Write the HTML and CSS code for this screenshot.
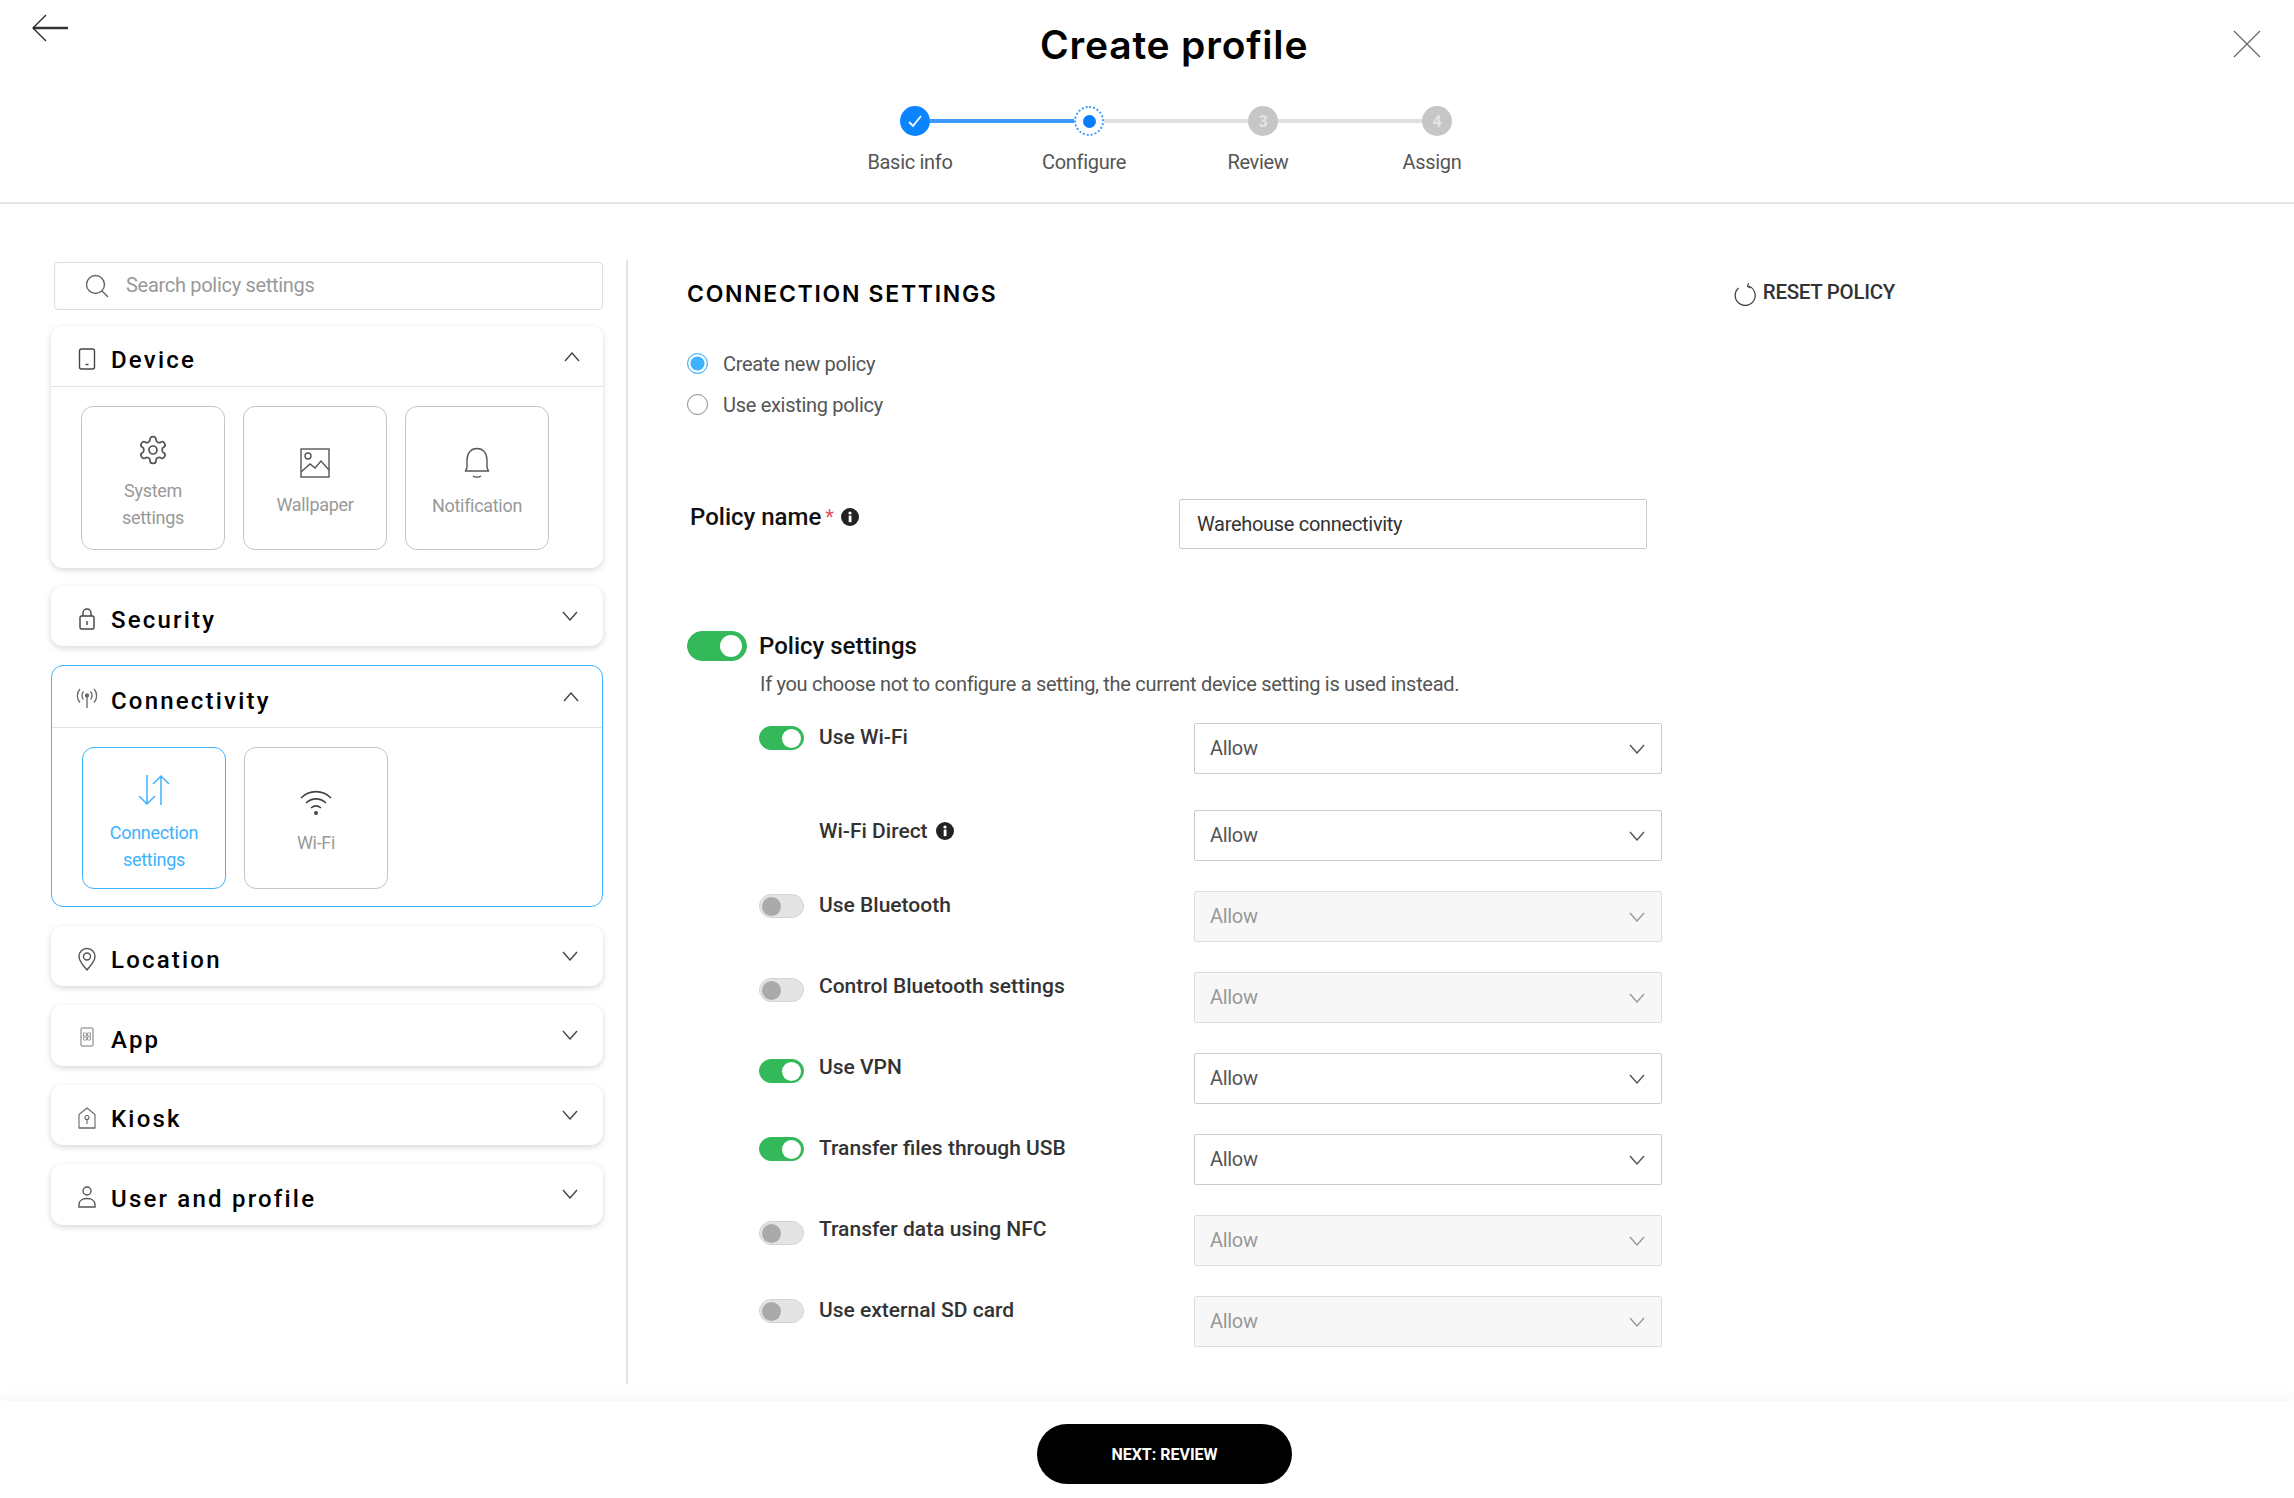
FILE: index.html
```html
<!DOCTYPE html>
<html>

<head>
    <meta charset="UTF-8">
    <title>Create profile</title>
    <link rel="stylesheet" href="styles.css">
</head>

<body>
    <svg class="sprite" width="0" height="0">
        <symbol id="chev-down" viewBox="0 0 16 10"><path d="M1 1l7 8 7-8" fill="none" stroke="currentColor" stroke-width="1.4"/></symbol>
        <symbol id="chev-up" viewBox="0 0 16 10"><path d="M1 9l7-8 7 8" fill="none" stroke="currentColor" stroke-width="1.4"/></symbol>
        <symbol id="info" viewBox="0 0 18 18"><circle cx="9" cy="9" r="9" fill="#222"/><rect x="7.7" y="7.6" width="2.8" height="6.6" fill="#fff"/><circle cx="9" cy="5" r="1.6" fill="#fff"/></symbol>
    </svg>

    <!-- top bar with steps -->
    <header class="top">
        <div class="top-row">
            <svg class="back" width="38" height="28" viewBox="0 0 38 28"><path d="M2 14h35" fill="none" stroke="#333" stroke-width="2.4"/><path d="M15 1L2 14l13 13" fill="none" stroke="#222" stroke-width="1.3"/></svg>
            <h1 class="title">Create profile</h1>
            <svg class="close" width="28" height="28" viewBox="0 0 28 28"><path d="M1 1l26 26M27 1L1 27" fill="none" stroke="#666" stroke-width="1.2"/></svg>
        </div>
        <div class="steps">
            <div class="dot dot-done"><svg width="16" height="14" viewBox="0 0 16 14"><path d="M2 8l4 4 8-10" fill="none" stroke="#fff" stroke-width="1.8"/></svg></div>
            <div class="line line-done"></div>
            <div class="dot dot-now"><span></span></div>
            <div class="line"></div>
            <div class="dot dot-todo">3</div>
            <div class="line"></div>
            <div class="dot dot-todo">4</div>
        </div>
        <div class="step-labels">
            <span>Basic info</span>
            <span>Configure</span>
            <span>Review</span>
            <span>Assign</span>
        </div>
    </header>

    <main class="page">
        <!-- policy categories -->
        <aside class="side">
            <div class="search">
                <svg width="24" height="24" viewBox="0 0 24 24"><circle cx="10.5" cy="10.5" r="9" fill="none" stroke="#666" stroke-width="1.4"/><path d="M17 17l6 6" fill="none" stroke="#666" stroke-width="1.4"/></svg>
                <span class="search-text">Search policy settings</span>
            </div>

            <section class="card card-device">
                <div class="card-head">
                    <svg class="card-icon" width="30" height="24" viewBox="0 0 30 24"><rect x="7.5" y="2" width="15" height="20" rx="2" fill="none" stroke="#444" stroke-width="1.4"/><path d="M13.500 17.500h3" stroke="#444" stroke-width="1.4"/></svg>
                    <span class="card-name">Device</span>
                    <svg class="chev chev-open"><use href="#chev-up"/></svg>
                </div>
                <div class="tiles">
                    <div class="tile">
                        <svg class="gear" width="32" height="32" viewBox="0 0 24 24" fill="none" stroke="#555" stroke-width="1.3"><path d="M12.220 2h-.44a2 2 0 0 0-2 2v.18a2 2 0 0 1-1 1.730l-.43.250a2 2 0 0 1-2 0l-.15-.08a2 2 0 0 0-2.730.730l-.22.380a2 2 0 0 0 .730 2.730l.15.100a2 2 0 0 1 1 1.720v.510a2 2 0 0 1-1 1.740l-.15.090a2 2 0 0 0-.730 2.730l.22.380a2 2 0 0 0 2.730.730l.15-.08a2 2 0 0 1 2 0l.43.250a2 2 0 0 1 1 1.730V20a2 2 0 0 0 2 2h.44a2 2 0 0 0 2-2v-.18a2 2 0 0 1 1-1.730l.43-.25a2 2 0 0 1 2 0l.15.080a2 2 0 0 0 2.730-.73l.22-.39a2 2 0 0 0-.73-2.730l-.15-.08a2 2 0 0 1-1-1.740v-.5a2 2 0 0 1 1-1.740l.15-.09a2 2 0 0 0 .730-2.730l-.22-.38a2 2 0 0 0-2.730-.73l-.15.080a2 2 0 0 1-2 0l-.43-.25a2 2 0 0 1-1-1.730V4a2 2 0 0 0-2-2z"/><circle cx="12" cy="12" r="3"/></svg>
                        <span class="tile-text">System<br>settings</span>
                    </div>
                    <div class="tile">
                        <svg width="30" height="30" viewBox="0 0 30 30" fill="none" stroke="#555" stroke-width="1.4"><rect x="1" y="1" width="28" height="28"/><circle cx="8" cy="8" r="3"/><path d="M1 24l9-8 5 4 6-7 8 9"/></svg>
                        <span class="tile-text">Wallpaper</span>
                    </div>
                    <div class="tile">
                        <svg width="26" height="32" viewBox="0 0 26 32" fill="none" stroke="#555" stroke-width="1.4"><path d="M1.500 24c0-1 1.500-2 1.500-4v-7C3 6 7 1.500 13 1.500S23 6 23 13v7c0 2 1.500 3 1.500 4z"/><path d="M9 29c2 1.500 6 1.500 8 0"/></svg>
                        <span class="tile-text">Notification</span>
                    </div>
                </div>
            </section>

            <section class="card">
                <div class="card-head">
                    <svg class="card-icon" width="30" height="24" viewBox="0 0 30 24" fill="none" stroke="#444" stroke-width="1.4"><rect x="8" y="9" width="14" height="13" rx="1.500"/><path d="M11 9V6a4 4 0 0 1 8 0v3M15 14v4"/></svg>
                    <span class="card-name">Security</span>
                    <svg class="chev"><use href="#chev-down"/></svg>
                </div>
            </section>

            <section class="card card-active">
                <div class="card-head">
                    <svg class="card-icon" width="30" height="24" viewBox="0 0 30 24" fill="none" stroke="#666" stroke-width="1.300"><path d="M15 9v12M11.500 4.500c-2 2-2 6 0 8M18.500 4.500c2 2 2 6 0 8M8 2c-3.500 3.500-3.500 10 0 13.500M22 2c3.500 3.500 3.500 10 0 13.500"/><circle cx="15" cy="8.500" r="1.500" fill="#666"/></svg>
                    <span class="card-name">Connectivity</span>
                    <svg class="chev chev-open"><use href="#chev-up"/></svg>
                </div>
                <div class="tiles">
                    <div class="tile tile-active">
                        <svg width="34" height="32" viewBox="0 0 34 32" fill="none" stroke="#3db2ff" stroke-width="1.500"><path d="M10 1v29M2 22l8 8 8-8M24 31V2M16 10l8-8 8 8"/></svg>
                        <span class="tile-text">Connection<br>settings</span>
                    </div>
                    <div class="tile">
                        <svg width="32" height="26" viewBox="0 0 32 26" fill="none" stroke="#444" stroke-width="1.600"><path d="M1 8c8-8.500 22-8.500 30 0M6 13c6-5.500 14-5.500 20 0M11 18c3-2.500 7-2.500 10 0"/><circle cx="16" cy="23" r="2" fill="#444" stroke="none"/></svg>
                        <span class="tile-text">Wi-Fi</span>
                    </div>
                </div>
            </section>

            <section class="card">
                <div class="card-head">
                    <svg class="card-icon" width="30" height="24" viewBox="0 0 30 24" fill="none" stroke="#555" stroke-width="1.400"><path d="M15 23C11 18 7 14.500 7 9.500a8 8 0 0 1 16 0C23 14.500 19 18 15 23z"/><circle cx="15" cy="9.500" r="3.500"/></svg>
                    <span class="card-name">Location</span>
                    <svg class="chev"><use href="#chev-down"/></svg>
                </div>
            </section>

            <section class="card card-tall">
                <div class="card-head">
                    <svg class="card-icon" width="30" height="24" viewBox="0 0 30 24" fill="none" stroke="#777" stroke-width="1"><rect x="9" y="2" width="12" height="18" rx="1"/><path d="M11.500 7h3v3h-3zM15.500 7h3v3h-3zM11.500 11h3v3h-3zM15.500 11h3v3h-3z" stroke-width=".7"/></svg>
                    <span class="card-name">App</span>
                    <svg class="chev"><use href="#chev-down"/></svg>
                </div>
            </section>

            <section class="card">
                <div class="card-head">
                    <svg class="card-icon" width="30" height="24" viewBox="0 0 30 24" fill="none" stroke="#666" stroke-width="1.100"><path d="M7 22V8.500L15 2l8 6.500V22z"/><circle cx="15" cy="11.500" r="2"/><path d="M15 13.500V18M7 22h16"/></svg>
                    <span class="card-name">Kiosk</span>
                    <svg class="chev"><use href="#chev-down"/></svg>
                </div>
            </section>

            <section class="card card-tall">
                <div class="card-head">
                    <svg class="card-icon" width="30" height="24" viewBox="0 0 30 24" fill="none" stroke="#555" stroke-width="1.400"><circle cx="15" cy="6" r="4"/><path d="M7 22v-2.500c0-3.500 3-6 8-6s8 2.500 8 6V22z"/></svg>
                    <span class="card-name">User and profile</span>
                    <svg class="chev"><use href="#chev-down"/></svg>
                </div>
            </section>
        </aside>

        <!-- selected policy form -->
        <section class="form">
            <div class="form-head">
                <h2 class="form-title">CONNECTION SETTINGS</h2>
                <div class="reset">
                    <svg width="24" height="24" viewBox="0 0 24 24" fill="none" stroke="#444" stroke-width="1.300"><path d="M15.500 4a10 10 0 1 1-10 2"/><path d="M15.500 1l-1 3.500 3 1.500" stroke-width="1.100"/></svg>
                    <span class="reset-text">RESET POLICY</span>
                </div>
            </div>

            <div class="radios">
                <div class="radio-row"><span class="radio radio-on"></span>Create new policy</div>
                <div class="radio-row"><span class="radio"></span>Use existing policy</div>
            </div>

            <div class="name-row">
                <div class="name-label">Policy name<span class="req">*</span><svg class="info" width="18" height="18"><use href="#info"/></svg></div>
                <div class="name-input">Warehouse connectivity</div>
            </div>

            <div class="policy-row">
                <span class="toggle toggle-big toggle-on"><span></span></span>
                <span class="policy-label">Policy settings</span>
            </div>
            <p class="policy-desc">If you choose not to configure a setting, the current device setting is used instead.</p>

            <div class="settings">
                <div class="row row-first">
                    <div class="row-label"><span class="toggle toggle-on"><span></span></span>Use Wi-Fi</div>
                    <div class="select"><span class="sel-text">Allow</span><svg class="sel-chev"><use href="#chev-down"/></svg></div>
                </div>
                <div class="row">
                    <div class="row-label row-label-down"><span class="toggle-gap"></span>Wi-Fi Direct<svg class="info" width="18" height="18"><use href="#info"/></svg></div>
                    <div class="select"><span class="sel-text">Allow</span><svg class="sel-chev"><use href="#chev-down"/></svg></div>
                </div>
                <div class="row">
                    <div class="row-label"><span class="toggle"><span></span></span>Use Bluetooth</div>
                    <div class="select select-off"><span class="sel-text">Allow</span><svg class="sel-chev"><use href="#chev-down"/></svg></div>
                </div>
                <div class="row">
                    <div class="row-label row-label-low"><span class="toggle"><span></span></span>Control Bluetooth settings</div>
                    <div class="select select-off"><span class="sel-text">Allow</span><svg class="sel-chev"><use href="#chev-down"/></svg></div>
                </div>
                <div class="row">
                    <div class="row-label row-label-low"><span class="toggle toggle-on"><span></span></span>Use VPN</div>
                    <div class="select"><span class="sel-text">Allow</span><svg class="sel-chev"><use href="#chev-down"/></svg></div>
                </div>
                <div class="row">
                    <div class="row-label"><span class="toggle toggle-on"><span></span></span>Transfer files through USB</div>
                    <div class="select"><span class="sel-text">Allow</span><svg class="sel-chev"><use href="#chev-down"/></svg></div>
                </div>
                <div class="row">
                    <div class="row-label row-label-low"><span class="toggle"><span></span></span>Transfer data using NFC</div>
                    <div class="select select-off"><span class="sel-text">Allow</span><svg class="sel-chev"><use href="#chev-down"/></svg></div>
                </div>
                <div class="row">
                    <div class="row-label"><span class="toggle"><span></span></span>Use external SD card</div>
                    <div class="select select-off"><span class="sel-text">Allow</span><svg class="sel-chev"><use href="#chev-down"/></svg></div>
                </div>
            </div>
        </section>
    </main>

    <footer class="foot">
        <button type="button" class="next">NEXT: REVIEW</button>
    </footer>
</body>

</html>
```

FILE: styles.css
```css
* {
    box-sizing: border-box;
}

body {
    margin: 0;
    width: 2294px;
    height: 1498px;
    overflow: hidden;
    background-color: #FFFFFF;
    color: #333333;
    font-family: "Roboto", sans-serif;
    font-size: 20px;
    letter-spacing: -0.3px;
}

.sprite {
    display: block;
    height: 0;
}

/* top bar */
.top {
    height: 204px;
    border-bottom: 2px solid #E6E6E6;
}

.top-row {
    display: flex;
    height: 106px;
}

.back {
    margin: 14px 0 0 31px;
}

.title {
    margin: 22px 0 0 971px;
    height: 46px;
    color: #000000;
    font-family: "Inter", sans-serif;
    font-size: 39px;
    font-weight: 600;
    letter-spacing: 0.8px;
    line-height: 46px;
}

.close {
    margin: 30px 33px 0 auto;
}

.steps {
    display: flex;
    align-items: center;
    height: 30px;
    margin-left: 900px;
}

.dot {
    display: flex;
    align-items: center;
    justify-content: center;
    flex: none;
    width: 30px;
    height: 30px;
    border-radius: 50%;
    color: #E4E4E4;
    font-size: 16px;
    font-weight: 700;
}

.dot-done {
    background-color: #0A84FF;
}

.dot-now {
    border: 2px dotted #3D9BFF;
}

.dot-now span {
    width: 13px;
    height: 13px;
    border-radius: 50%;
    background-color: #0A7CFF;
}

.dot-todo {
    background-color: #C6C6C6;
}

.line {
    width: 144px;
    height: 4px;
    background-color: #E0E0E0;
}

.line-done {
    background-color: #3D9BFF;
}

.step-labels {
    display: flex;
    margin: 12px 0 0 823px;
    color: #555555;
    font-size: 20px;
    line-height: 28px;
}

.step-labels span {
    width: 174px;
    text-align: center;
}

/* page body */
.page {
    display: flex;
    height: 1185px;
}

.side {
    display: flex;
    flex-direction: column;
    width: 575px;
    margin-left: 51px;
    padding: 58px 23px 0 0;
    flex: none;
}

.search {
    display: flex;
    align-items: center;
    gap: 17px;
    height: 48px;
    margin-left: 3px;
    margin-bottom: 16px;
    padding-left: 30px;
    border: 1px solid #DDDDDD;
    border-radius: 4px;
    color: #999999;
}

.search-text {
    margin-bottom: 3px;
}

.card {
    margin-bottom: 19px;
    border-radius: 12px;
    background-color: #FFFFFF;
    box-shadow: 0 2px 6px rgba(0, 0, 0, 0.16);
}

.card-device {
    margin-bottom: 18px;
}

.card-head {
    display: flex;
    align-items: center;
    height: 60px;
    padding: 0 25px 0 21px;
}

.card-tall .card-head {
    height: 61px;
}

.card-device .card-head,
.card-active .card-head {
    height: 61px;
    border-bottom: 1px solid #E2E2E2;
}

.card-active {
    border: 1.5px solid #3DB2FF;
    box-shadow: none;
}

.card-active .card-head {
    height: 62px;
    padding-left: 20px;
}

.card-icon {
    flex: none;
    margin-top: 5px;
}

.card-name {
    margin: 8px 0 0 9px;
    color: #000000;
    font-size: 24px;
    font-weight: 500;
    letter-spacing: 2.2px;
    line-height: 30px;
}

.chev {
    width: 16px;
    height: 10px;
    margin: -1px 0 0 auto;
    color: #444444;
}

.chev-open {
    margin-top: 1px;
    margin-right: -2px;
}

.tiles {
    display: flex;
    gap: 18px;
    padding: 19px 30px 18px;
}

.card-active .tiles {
    padding-bottom: 17px;
}

.tile {
    display: flex;
    flex-direction: column;
    align-items: center;
    justify-content: center;
    width: 144px;
    height: 144px;
    padding-top: 10px;
    border: 1px solid #C4C4C4;
    border-radius: 12px;
    color: #999999;
}

.card-active .tile {
    height: 142px;
}

.gear {
    margin: -2px;
}

.tile-text {
    margin-top: 13px;
    font-size: 18px;
    line-height: 27px;
    text-align: center;
}

.tile-active {
    border: 1.5px solid #3DB2FF;
    color: #3DB2FF;
}

/* form column */
.form {
    flex: none;
    width: 1100px;
    height: 1124px;
    margin-top: 56px;
    padding: 14px 0 0 59px;
    border-left: 2px solid #E4E4E4;
}

.form-head {
    display: flex;
    align-items: center;
    justify-content: space-between;
    width: 1208px;
    height: 39px;
}

.form-title {
    margin: 0;
    color: #000000;
    font-family: "Inter", sans-serif;
    font-size: 23px;
    font-weight: 600;
    letter-spacing: 1.7px;
}

.reset {
    display: flex;
    align-items: center;
    gap: 6px;
    font-size: 20.5px;
    font-weight: 500;
}

.reset-text {
    margin-bottom: 3px;
}

.radios {
    display: flex;
    flex-direction: column;
    gap: 20px;
    margin-top: 40px;
}

.radio-row {
    display: flex;
    align-items: center;
    gap: 15px;
    height: 21px;
    color: #555555;
}

.radio {
    width: 21px;
    height: 21px;
    border: 1.5px solid #888888;
    border-radius: 50%;
}

.radio-on {
    border-color: #3DB2FF;
    background-color: #3DB2FF;
    box-shadow: inset 0 0 0 2.5px #FFFFFF;
}

.name-row {
    display: flex;
    margin-top: 84px;
}

.name-label {
    display: flex;
    align-items: center;
    width: 492px;
    height: 36px;
    padding-left: 3px;
    color: #111111;
    font-size: 24px;
    font-weight: 500;
    letter-spacing: 0;
}

.req {
    margin: 0 7px 0 4px;
    color: #E8505B;
    font-size: 20px;
    font-weight: 400;
}

.name-input {
    display: flex;
    align-items: center;
    width: 468px;
    height: 50px;
    padding-left: 17px;
    border: 1px solid #CCCCCC;
    border-radius: 2px;
}

.policy-row {
    display: flex;
    align-items: center;
    gap: 12px;
    height: 30px;
    margin-top: 82px;
}

.policy-label {
    color: #111111;
    font-size: 24px;
    font-weight: 500;
    letter-spacing: 0;
}

.policy-desc {
    margin: 9px 0 0 73px;
    color: #555555;
    line-height: 28px;
}

.toggle {
    display: flex;
    flex: none;
    align-items: center;
    width: 45px;
    height: 24px;
    padding: 2px;
    border: 1px solid #D4D4D4;
    border-radius: 12px;
    background-color: #E4E4E4;
}

.toggle span {
    width: 19px;
    height: 19px;
    border-radius: 50%;
    background-color: #AAAAAA;
}

.toggle-on {
    justify-content: flex-end;
    border-color: #33B85A;
    background-color: #33B85A;
}

.toggle-on span {
    background-color: #FFFFFF;
}

.toggle-big {
    width: 60px;
    height: 30px;
    padding: 4px;
    border-radius: 15px;
}

.toggle-big span {
    width: 22px;
    height: 22px;
}

.toggle-gap {
    flex: none;
    width: 45px;
}

.settings {
    margin: 25px 0 0 72px;
}

.row {
    display: grid;
    grid-template-columns: 435px 468px;
    height: 81px;
}

.row-first {
    height: 87px;
}

.row-label {
    display: flex;
    align-items: flex-start;
    gap: 15px;
    padding-top: 3px;
    color: #333333;
    font-weight: 500;
    font-size: 21px;
    letter-spacing: 0;
    line-height: 22px;
}

.row-label-low .toggle {
    margin-top: 3px;
}

.row-label-down {
    padding-top: 10px;
}

.row-label .info {
    margin: 2px 0 0 -7px;
}

.select {
    display: flex;
    align-items: center;
    justify-content: space-between;
    height: 51px;
    padding: 0 16px 0 15px;
    border: 1px solid #CCCCCC;
    border-radius: 2px;
    color: #555555;
}

.sel-text {
    margin-bottom: 2px;
}

.select-off {
    border-color: #DDDDDD;
    background-color: #F7F7F7;
    color: #999999;
}

.sel-chev {
    width: 16px;
    height: 10px;
    color: #555555;
}

.select-off .sel-chev {
    color: #999999;
}

/* bottom bar */
.foot {
    display: flex;
    justify-content: center;
    height: 109px;
    margin-top: 12px;
    padding: 23px 0 0 35px;
    background-color: #FFFFFF;
    box-shadow: 0 -6px 12px rgba(0, 0, 0, 0.03);
}

.next {
    width: 255px;
    height: 60px;
    border: none;
    border-radius: 30px;
    background-color: #000000;
    color: #FFFFFF;
    font-family: "Roboto", sans-serif;
    font-size: 16px;
    font-weight: 700;
    letter-spacing: 0;
}
```
